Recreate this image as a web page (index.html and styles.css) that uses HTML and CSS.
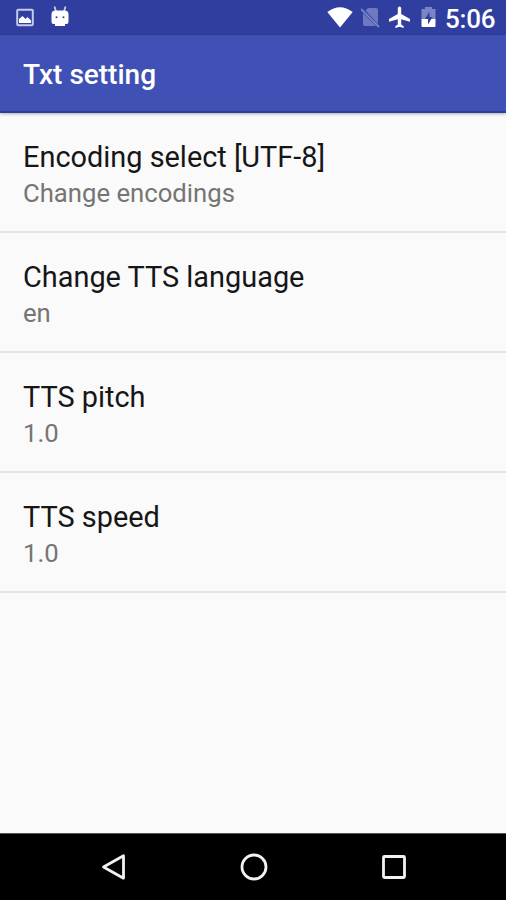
FILE: index.html
```
<!DOCTYPE html>
<html lang="en">
<head>
<meta charset="utf-8">
<title>Txt setting</title>
<link rel="stylesheet" href="styles.css">
</head>
<body>
<div class="screen">

  <!-- Status bar -->
  <div class="status-bar">
    <div class="status-left">
      <svg width="18" height="22" viewBox="0 0 18 22">
        <rect x="1.2" y="3.7" width="15.6" height="15.6" rx="1" fill="none" stroke="#c5c9ea" stroke-width="2"/>
        <path d="M3 17v-4l3.5-3 3 3 2-2 3.5 3.5V17z" fill="#fff"/>
      </svg>
      <svg width="18" height="22" viewBox="0 0 18 22">
        <path d="M3.500 .5l1.500 5M14.500 .5l-1.500 5" stroke="#c5c9ea" stroke-width="1.800"/>
        <path d="M.5 8q0-3.500 4-3.500h9q4 0 4 3.500v8q0 2-2 2H14v2H4v-2H2.500q-2 0-2-2z" fill="#fff"/>
        <circle cx="5.500" cy="11.300" r="1" fill="#303f9f"/>
        <circle cx="12.500" cy="11.300" r="1" fill="#303f9f"/>
      </svg>
    </div>
    <div class="status-right">
      <svg width="26" height="22" viewBox="0 0 26 22">
        <path d="M.3 6Q13-3.500 25.700 6L13 21.500z" fill="#fff"/>
      </svg>
      <svg width="20" height="22" viewBox="1 0 20 22">
        <path d="M5.500 4.500L8 2h8q2 0 2 2v14zM3 7l13 13H5q-2 0-2-2z" fill="#6f79bf"/>
        <path d="M1 3l18 18" stroke="#7b85c6" stroke-width="1.800"/>
      </svg>
      <svg width="23" height="22" viewBox="0 0 23 22">
        <path d="M8.800 2q1.700-2.800 3.400 0v6l8.800 5v2.700l-8.800-2.500v5.300l2.500 1.800V22l-4.200-1.200L6.300 22v-1.700l2.500-1.800v-5.300L0 15.700V13l8.800-5z" fill="#fff"/>
      </svg>
      <svg width="17" height="22" viewBox="-1 0 17 22">
        <path d="M.5 3H4V1h7v2h3.500v10H.5z" fill="#7b85c6"/>
        <path d="M.5 13h14v7q0 1-1 1h-12q-1 0-1-1z" fill="#fff"/>
        <path d="M8.500 5.500L4 13h3v5.500L11.500 11h-3z" fill="#303f9f"/>
      </svg>
      <span class="clock">5:06</span>
    </div>
  </div>

  <header class="toolbar">
    <h1>Txt setting</h1>
  </header>

  <!-- Preferences -->
  <ul class="prefs">
    <li class="pref">
      <div class="pref-title">Encoding select [UTF-8]</div>
      <div class="pref-summary">Change encodings</div>
    </li>
    <li class="pref">
      <div class="pref-title">Change TTS language</div>
      <div class="pref-summary">en</div>
    </li>
    <li class="pref">
      <div class="pref-title">TTS pitch</div>
      <div class="pref-summary">1.0</div>
    </li>
    <li class="pref">
      <div class="pref-title">TTS speed</div>
      <div class="pref-summary">1.0</div>
    </li>
  </ul>

  <!-- Navigation bar -->
  <nav class="nav-bar">
    <svg width="28" height="30" viewBox="0 0 28 30">
      <path d="M23.500 3.800v22.400L3.500 15z" fill="none" stroke="#f2f2f2" stroke-width="2.800" stroke-linejoin="round"/>
    </svg>
    <svg width="28" height="30" viewBox="0 0 28 30">
      <circle cx="14" cy="15" r="12" fill="none" stroke="#f2f2f2" stroke-width="2.800"/>
    </svg>
    <svg width="28" height="30" viewBox="0 0 28 30">
      <rect x="3.500" y="4.500" width="21" height="21" rx="1" fill="none" stroke="#f2f2f2" stroke-width="2.800"/>
    </svg>
  </nav>

</div>
</body>
</html>
```
FILE: styles.css
```
*{margin:0;padding:0;box-sizing:border-box}
body{
  background:#fafafa;
  font-family:Roboto,"Liberation Sans",sans-serif;
  color:#161616;
}
svg{display:block}
.screen{
  height:900px;
  display:flex;
  flex-direction:column;
}
.status-bar{
  height:35px;
  padding:0 12px 0 16px;
  background:#303f9f;
  display:flex;
  justify-content:space-between;
}
.status-left,
.status-right{
  display:flex;
  align-items:flex-start;
  padding-top:6px;
}
.status-left{gap:17px}
.status-right{gap:8px}
.clock{
  width:49px;
  font-size:26px;
  font-weight:500;
  line-height:27px;
  letter-spacing:-.2px;
  color:#fff;
}
.toolbar{
  height:78px;
  padding:4px 0 0 23px;
  background:#3f51b5;
  border-bottom:2px solid #2840a0;
  box-shadow:0 1px 3px rgba(0,0,0,.3);
  display:flex;
  align-items:center;
}
.toolbar h1{
  font-size:28px;
  font-weight:500;
  line-height:32px;
  color:#fff;
}
.prefs{
  flex:1;
  list-style:none;
}
.pref{
  height:120px;
  padding:26px 24px 0 23px;
  border-bottom:2px solid #e4e4e4;
}
.pref-title{
  font-size:28.9px;
  line-height:36px;
}
.pref-summary{
  font-size:25.7px;
  line-height:37px;
  color:#757575;
}
.nav-bar{
  height:67px;
  padding-left:1px;
  background:#000;
  border-top:1px solid #555;
  display:flex;
  justify-content:center;
  align-items:center;
  gap:112px;
}
```
